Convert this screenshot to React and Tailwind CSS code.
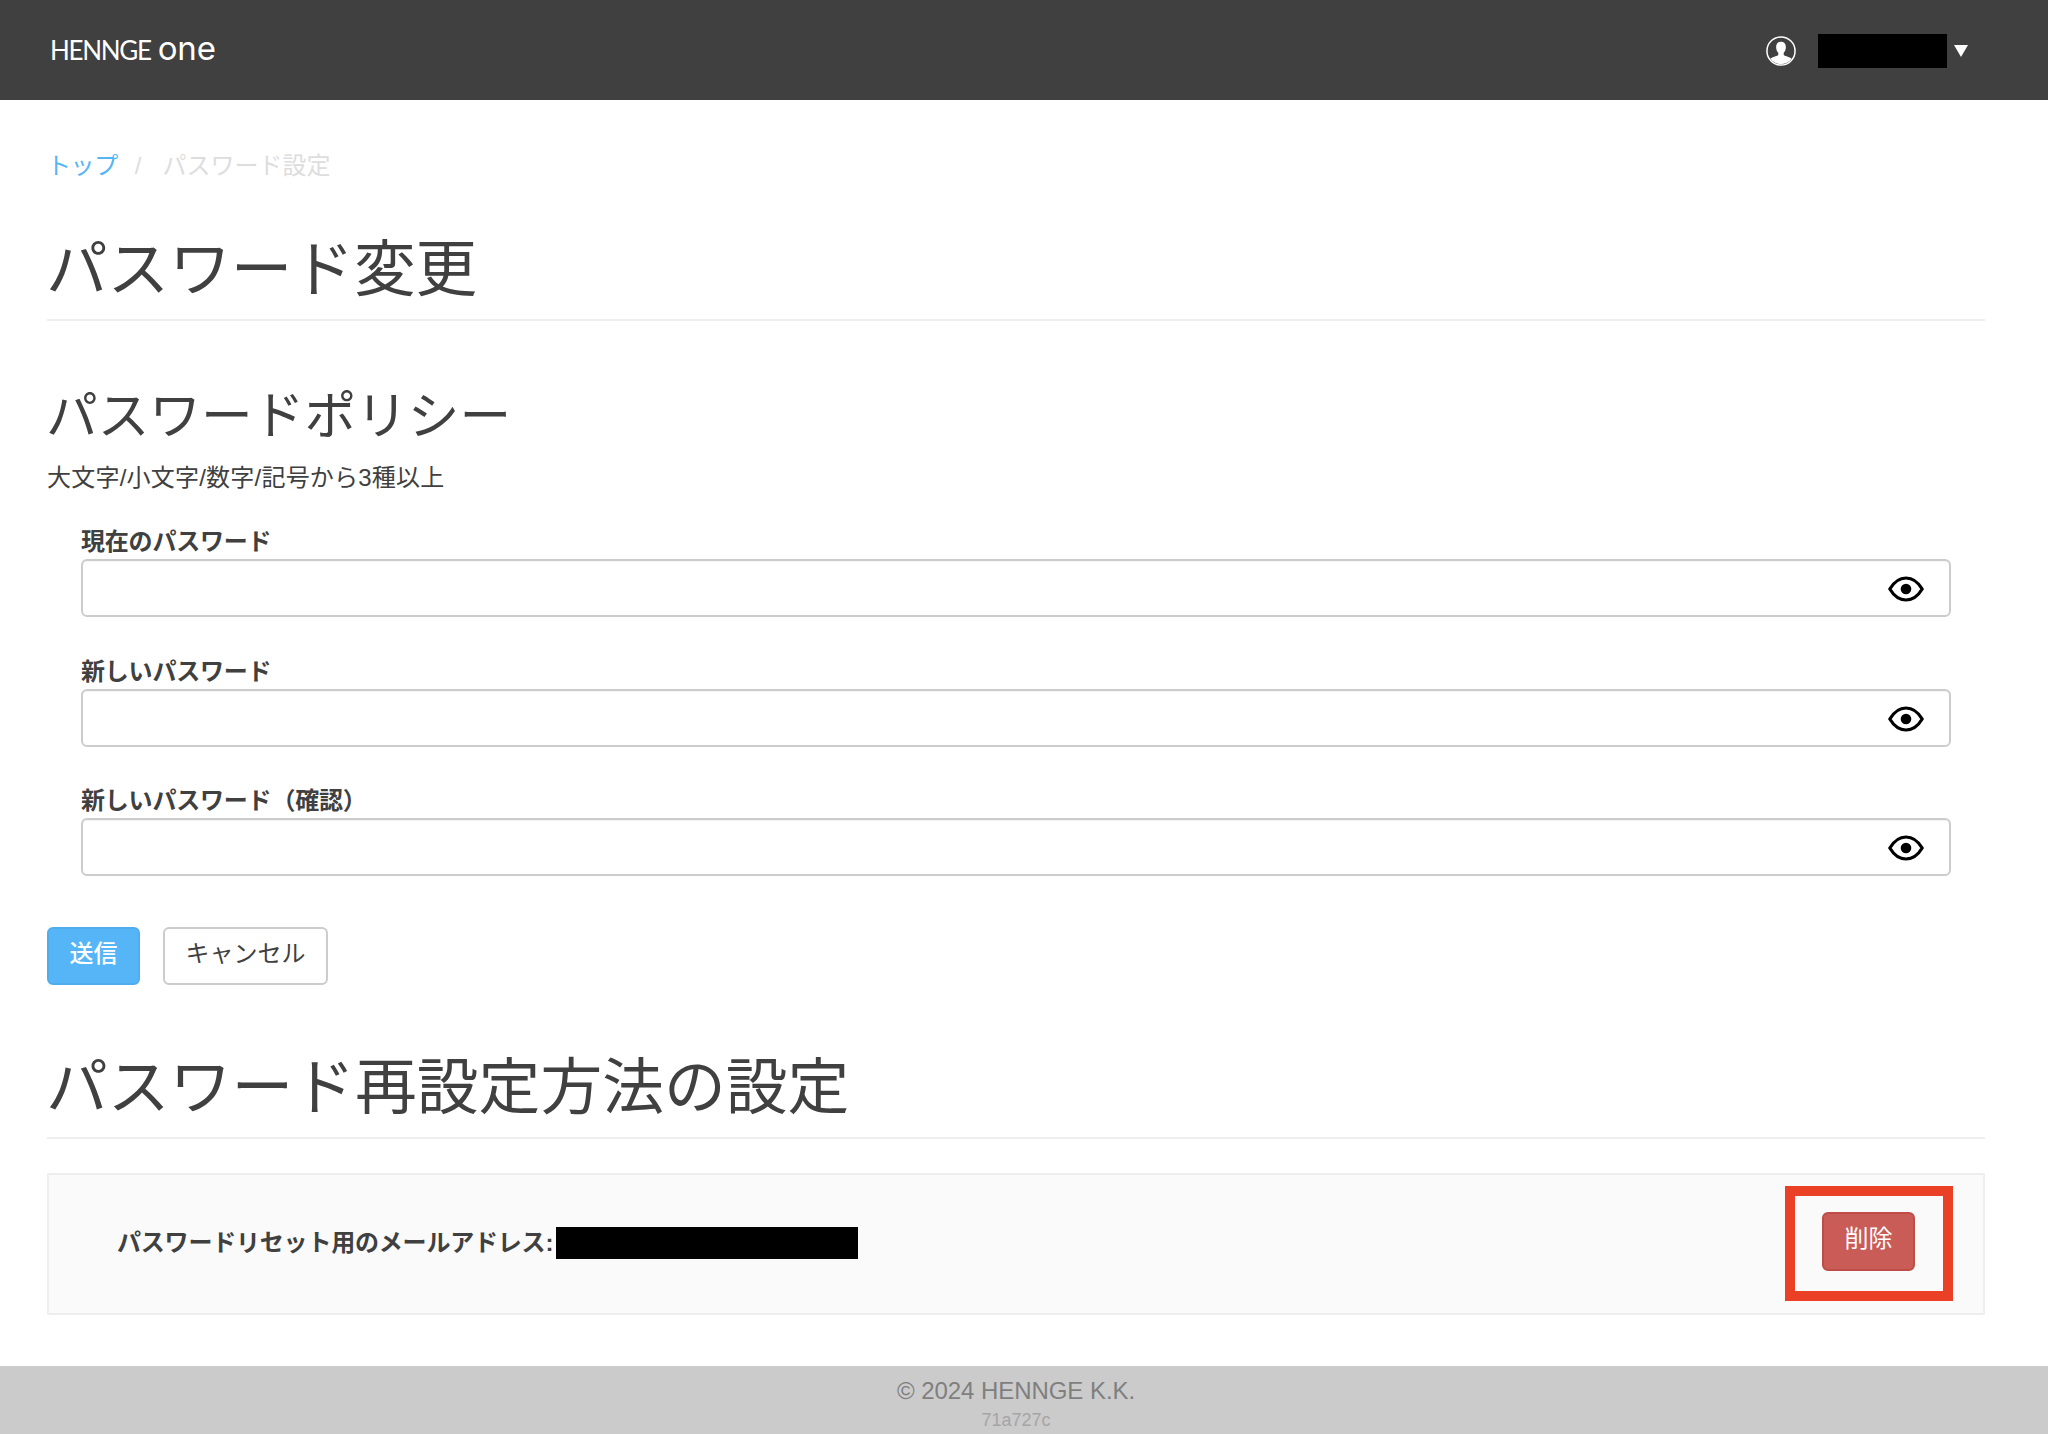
const jp = { fontFamily: '"Liberation Sans","Noto Sans CJK JP",sans-serif' };

function Eye() {
  return (
    <svg width="36" height="26" viewBox="0 0 36 26" className="block">
      <path d="M1.800 13C6 6 11.500 2 18 2s12 4 16.200 11C30 20 24.500 24 18 24S6 20 1.800 13Z" fill="none" stroke="#000" strokeWidth="3.200" strokeLinejoin="round" />
      <circle cx="18" cy="13" r="5.300" fill="#000" />
    </svg>
  );
}

function UserIcon() {
  return (
    <svg width="30" height="30" viewBox="0 0 32 32" className="block">
      <defs>
        <clipPath id="c"><circle cx="16" cy="16" r="14" /></clipPath>
      </defs>
      <circle cx="16" cy="16" r="15" fill="none" stroke="#fff" strokeWidth="1.600" />
      <g clipPath="url(#c)" fill="#fff">
        <path d="M16 6c3.300 0 5.200 2.400 5.200 5.600 0 2.500-1 5-2.300 6.300v2.300c1.600 1.500 7.100 2 8.600 4.200l.5 8H4l.5-8c1.500-2.200 7-2.700 8.600-4.200v-2.300c-1.300-1.300-2.300-3.800-2.300-6.300C10.800 8.400 12.700 6 16 6Z" />
      </g>
    </svg>
  );
}

function Field({ label, mt }) {
  return (
    <div className={mt}>
      <label className="block h-[32px] text-[24px] leading-[30px] font-bold tracking-[-0.2px] text-[#404040]">{label}</label>
      <div className="flex h-[58px] items-center justify-end rounded-[6px] border-2 border-[#cccccc] bg-white pt-[1px] pr-[25px] shadow-[inset_0_1px_1px_rgba(0,0,0,0.05)]">
        <Eye />
      </div>
    </div>
  );
}

export default function App() {
  return (
    <div style={jp} className="flex min-h-[1434px] flex-col bg-white text-[#404040]">
      <header className="flex h-[100px] items-center justify-between bg-[#404040] pl-[50px] pr-[80px]">
        <div className="flex items-baseline pb-[3px] text-white" style={{ fontFamily: 'Lato, sans-serif' }}>
          <span className="text-[26px] leading-none tracking-[-1.3px]">HENNGE</span>
          <span className="ml-[7px] text-[33px] leading-none font-normal tracking-[-0.2px]" style={{ fontFamily: 'Inter, sans-serif' }}>one</span>
        </div>
        <div className="flex items-center pt-[2px]">
          <UserIcon />
          <div className="ml-[22px] h-[34px] w-[129px] bg-black" />
          <div className="ml-[7px] h-0 w-0 border-x-[7px] border-t-[12px] border-x-transparent border-t-white" />
        </div>
      </header>

      <main className="flex-1 pl-[47px] pr-[63px]">
        <nav className="mt-[51px] flex h-[30px] items-center text-[24px] leading-[30px]">
          <span className="tracking-[-0.4px] text-[#55b5f7]">トップ</span>
          <span className="ml-[17px] text-[#dddddd]">/</span>
          <span className="ml-[21px] text-[#dddddd]">パスワード設定</span>
        </nav>

        <h1 className="mt-[53px] h-[87px] border-b-2 border-[#eeeeee] pb-[10px] text-[61.6px] leading-[72px] font-normal"><span className="-ml-[1px] block">パスワード変更</span></h1>

        <h2 className="mt-[64px] h-[64px] text-[51.7px] leading-[62px] font-normal"><span className="-ml-[1px] block">パスワードポリシー</span></h2>
        <p className="mt-[14px] h-[30px] text-[24px] leading-[30px] tracking-[0.22px]">大文字/小文字/数字/記号から3種以上</p>

        <form className="mt-[34px] px-[34px]">
          <Field label="現在のパスワード" />
          <Field label="新しいパスワード" mt="mt-[40px]" />
          <Field label="新しいパスワード（確認）" mt="mt-[39px]" />
        </form>

        <div className="mt-[51px] flex gap-[23px]">
          <button className="flex h-[58px] w-[93px] items-center justify-center rounded-[6px] border-2 border-[#4fadee] bg-[#55b5f7] pb-[5px] text-[24px] font-medium text-white">送信</button>
          <button className="flex h-[58px] w-[165px] items-center justify-center rounded-[6px] border-2 border-[#cccccc] bg-white pb-[5px] text-[24px] text-[#404040]">キャンセル</button>
        </div>

        <h1 className="mt-[63px] h-[91px] border-b-2 border-[#eeeeee] pb-[10px] text-[61.8px] leading-[80px] font-normal"><span className="-ml-[1px] block">パスワード再設定方法の設定</span></h1>

        <section className="mt-[34px] flex h-[142px] items-center justify-between rounded-[2px] border-2 border-[#eeeeee] bg-[#fafafa] pl-[68px] pr-[30px]">
          <div className="flex items-center pb-[2px]">
            <span className="text-[24px] font-bold leading-[30px] tracking-[-0.2px]">パスワードリセット用のメールアドレス:</span>
            <span className="ml-[3px] h-[32px] w-[302px] bg-black" />
          </div>
          <div className="mb-[1px] flex h-[115px] w-[168px] items-center justify-center border-[10px] border-[#ea4025]">
            <button className="mr-[1px] mb-[4px] flex h-[59px] w-[93px] items-center justify-center rounded-[6px] border-2 border-[#bf4c46] bg-[#c95c56] pb-[6px] text-[24px] text-white">削除</button>
          </div>
        </section>
      </main>

      <footer className="flex h-[68px] flex-col items-center bg-[#cbcbcb] pt-[11px] pr-[16px]">
        <div className="text-[24px] leading-[28px] tracking-[-0.05px] text-[#7f7f7f]">© 2024 HENNGE K.K.</div>
        <div className="mt-[5px] text-[18px] leading-[20px] text-[#a5a5a5]">71a727c</div>
      </footer>
    </div>
  );
}
